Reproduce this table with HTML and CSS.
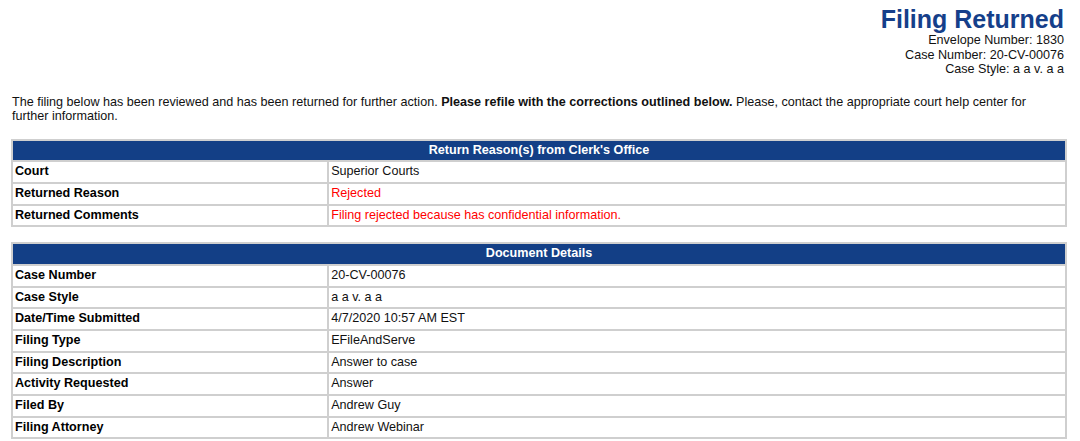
FILE: index.html
```html
<!DOCTYPE html>
<html>
<head>
<meta charset="utf-8">
<link rel="stylesheet" href="styles.css">
</head>
<body>
<div class="header">
  <div class="title">Filing Returned</div>
  <div class="meta">Envelope Number: 1830</div>
  <div class="meta">Case Number: 20-CV-00076</div>
  <div class="meta">Case Style: a a v. a a</div>
</div>
<p class="intro">The filing below has been reviewed and has been returned for further action. <b>Please refile with the corrections outlined below.</b> Please, contact the appropriate court help center for further information.</p>
<table class="grid">
  <tr><th colspan="2">Return Reason(s) from Clerk's Office</th></tr>
  <tr><td class="label">Court</td><td>Superior Courts</td></tr>
  <tr><td class="label">Returned Reason</td><td class="red">Rejected</td></tr>
  <tr><td class="label">Returned Comments</td><td class="red">Filing rejected because has confidential information.</td></tr>
</table>
<table class="grid">
  <tr><th colspan="2">Document Details</th></tr>
  <tr><td class="label">Case Number</td><td>20-CV-00076</td></tr>
  <tr><td class="label">Case Style</td><td>a a v. a a</td></tr>
  <tr><td class="label">Date/Time Submitted</td><td>4/7/2020 10:57 AM EST</td></tr>
  <tr><td class="label">Filing Type</td><td>EFileAndServe</td></tr>
  <tr><td class="label">Filing Description</td><td>Answer to case</td></tr>
  <tr><td class="label">Activity Requested</td><td>Answer</td></tr>
  <tr><td class="label">Filed By</td><td>Andrew Guy</td></tr>
  <tr><td class="label">Filing Attorney</td><td>Andrew Webinar</td></tr>
</table>
</body>
</html>
```
FILE: styles.css
```css
html, body {
  background: #ffffff;
}
body {
  margin: 0 13px 0 11px;
  padding-top: 5px;
  font-family: "Liberation Sans", Arial, sans-serif;
  font-size: 12.6px;
  color: #000000;
}
.header {
  text-align: right;
  padding-right: 3px;
}
.title {
  font-size: 25px;
  line-height: 28px;
  font-weight: bold;
  color: #153f8a;
}
.meta {
  line-height: 14.5px;
  color: #111111;
}
.intro {
  margin: 18px 12px 15px 1px;
  line-height: 14.5px;
  color: #111111;
}
.grid {
  width: 100%;
  border-collapse: collapse;
  border: 2px solid #cfcfcf;
  margin-bottom: 15px;
}
.grid th {
  background: #133f86;
  color: #ffffff;
  font-weight: bold;
  text-align: center;
  padding: 2px 2px;
  line-height: 15.67px;
  border: 2px solid #cfcfcf;
}
.grid td {
  padding: 2px 2px;
  line-height: 15.67px;
  border: 2px solid #cfcfcf;
  color: #111111;
  text-align: left;
}
.grid td.label {
  width: 30%;
  font-weight: bold;
  color: #000000;
}
.grid td.red {
  color: #ff0000;
}
```
